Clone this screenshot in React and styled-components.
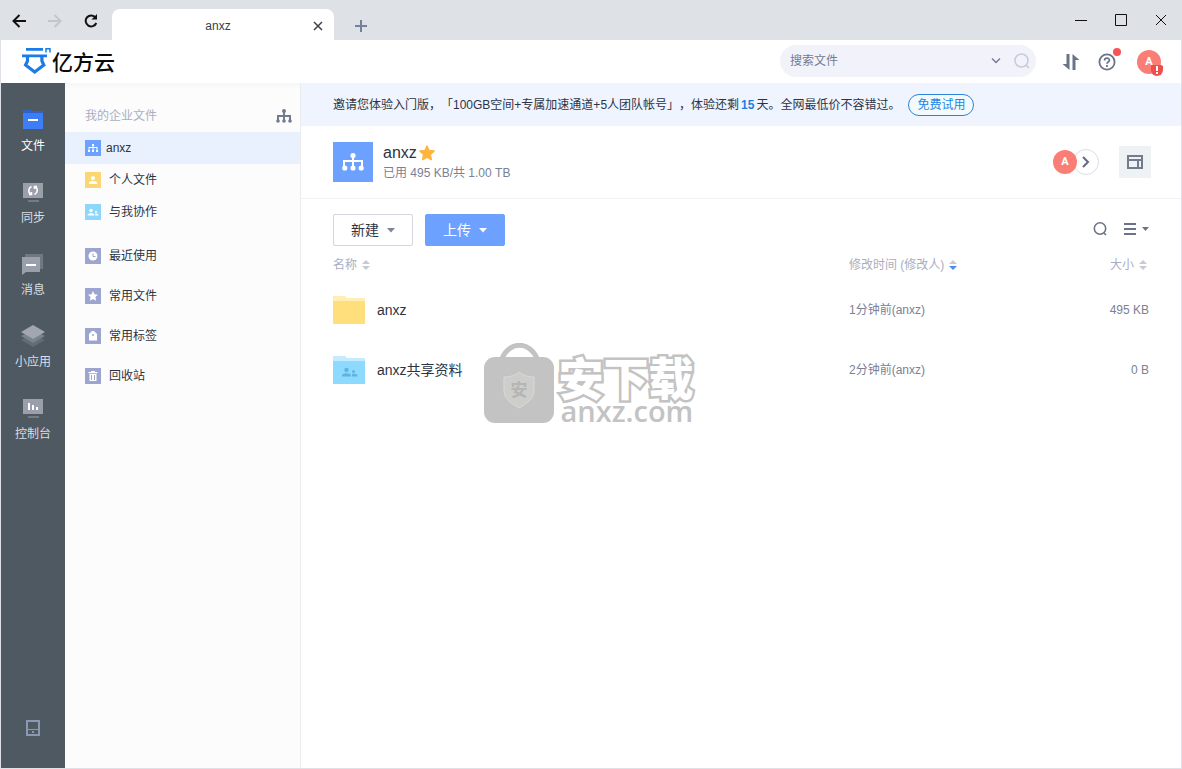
import React, { useState } from 'react';
import styled, { createGlobalStyle, css } from 'styled-components';

const GlobalStyle = createGlobalStyle`
  * {
    box-sizing: border-box;
  }

  body {
    margin: 0;
    background: #fff;
    color: #2c3444;
    font-family: 'Liberation Sans', 'Noto Sans CJK SC', sans-serif;
    font-size: 12px;
    line-height: 20px;
    text-spacing-trim: space-all;
  }

  button,
  input {
    font: inherit;
    color: inherit;
  }

  button {
    padding: 0;
    border: 0;
    background: none;
    cursor: pointer;
  }

  a {
    color: inherit;
    text-decoration: none;
  }

  h1,
  h2,
  p,
  ul {
    margin: 0;
    padding: 0;
    font-weight: 400;
    list-style: none;
  }

  svg {
    display: block;
    flex: none;
  }
`;

const StyledWindow = styled.div`
  position: relative;
  display: flex;
  flex-direction: column;
  min-height: 100vh;
  background: #dee1e6;
`;

const StyledTitleBar = styled.div`
  display: flex;
  align-items: flex-end;
  height: 40px;
  padding: 0 1px 0 2px;
`;

const StyledNavButtons = styled.div`
  display: flex;
  align-self: center;
  gap: 2px;
  width: 110px;
  padding-top: 2px;
`;

const StyledToolButton = styled.button`
  display: grid;
  place-items: center;
  width: 34px;
  height: 24px;
  color: ${({ $color }) => $color || '#111'};
`;

const StyledTab = styled.div`
  display: flex;
  align-items: center;
  width: 222px;
  height: 31px;
  padding: 2px 10px 0 12px;
  border-radius: 8px 8px 0 0;
  background: #fff;
  color: #3c4043;

  span {
    flex: 1;
    text-align: center;
  }
`;

const StyledNewTab = styled.button`
  display: grid;
  place-items: center;
  width: 24px;
  height: 28px;
  margin-left: 15px;
  color: #75819b;
`;

const StyledWindowButtons = styled.div`
  display: flex;
  align-self: center;
  margin-left: auto;

  button {
    display: grid;
    place-items: center;
    width: 40px;
    height: 40px;
    color: #111;
  }
`;

const StyledApp = styled.div`
  flex: 1;
  display: flex;
  flex-direction: column;
  margin: 0 1px 1px;
  background: #fff;
`;

const StyledHeader = styled.header`
  display: flex;
  align-items: center;
  height: 43px;
  padding: 0 20px;
`;

const StyledLogo = styled.a`
  display: flex;
  align-items: center;
  gap: 1px;
  padding-bottom: 1px;
  color: #0a0a0a;
  font-family: 'Noto Sans CJK SC', sans-serif;
  font-size: 21px;
  font-weight: 500;
`;

const StyledSearch = styled.form`
  display: flex;
  align-items: center;
  width: 256px;
  height: 32px;
  margin: 0 23px 2px auto;
  padding: 0 1px 0 10px;
  border-radius: 16px;
  background: #f2f3fa;
  color: #737a92;

  input {
    flex: 1;
    min-width: 0;
    padding: 0;
    border: 0;
    outline: 0;
    background: none;
  }

  input::placeholder {
    color: #737a92;
    opacity: 1;
  }

  button {
    display: grid;
    place-items: center;
    width: 26px;
    height: 24px;
  }
`;

const StyledHeaderActions = styled.div`
  display: flex;
  align-items: center;
  gap: 12px;
`;

const StyledHeaderButton = styled.button`
  position: relative;
  display: grid;
  place-items: center;
  width: 24px;
  height: 24px;
  color: #6b7389;
`;

const StyledAccount = styled(StyledHeaderButton)`
  margin-left: 6px;
`;

const StyledDot = styled.i`
  position: absolute;
  top: -2px;
  right: -2px;
  width: 8px;
  height: 8px;
  border-radius: 50%;
  background: #f75555;
`;

const StyledAvatar = styled.span`
  position: relative;
  display: grid;
  place-items: center;
  width: 24px;
  height: 24px;
  border-radius: 50%;
  background: #fb7e76;
  color: #fff;
  font-family: Roboto, sans-serif;
  font-size: 11px;
  font-weight: 700;
`;

const StyledAlert = styled.i`
  position: absolute;
  right: -2px;
  bottom: -2px;
`;

const StyledBody = styled.div`
  flex: 1;
  display: flex;
`;

const StyledRail = styled.nav`
  display: flex;
  flex-direction: column;
  width: 64px;
  padding: 12px 0 28px;
  background: #4e5962;
`;

const StyledRailItem = styled.a`
  display: flex;
  flex-direction: column;
  align-items: center;
  gap: 4px;
  height: 72px;
  padding-top: 13px;
  color: ${({ $active }) => ($active ? '#fff' : '#dbdee3')};
`;

const StyledDevice = styled.button`
  display: grid;
  place-items: center;
  height: 24px;
  margin-top: auto;
  color: #8c98b0;
`;

const StyledPanel = styled.aside`
  width: 236px;
  border-right: 1px solid #ebecef;
  background: linear-gradient(#f6f6f8, #fcfcfc 6px);
`;

const StyledPanelHeading = styled.div`
  display: flex;
  align-items: center;
  justify-content: space-between;
  height: 49px;
  padding: 16px 8px 0 20px;
  color: #a9aec0;

  h2 {
    font-size: 12px;
  }

  button {
    color: #737b8e;
  }
`;

const StyledPanelList = styled.ul`
  & + & {
    margin-top: 8px;
  }
`;

const StyledPanelLink = styled.a`
  display: flex;
  align-items: center;
  gap: ${({ $latin }) => ($latin ? 5 : 8)}px;
  height: ${({ $tall }) => ($tall ? 40 : 32)}px;
  padding-left: 20px;
  ${({ $active }) =>
    $active &&
    css`
      background: #e9f1ff;
    `}
`;

const StyledMain = styled.main`
  flex: 1;
  min-width: 0;
`;

const StyledBanner = styled.div`
  display: flex;
  align-items: center;
  height: 43px;
  padding: 0 32px;
  background: #f0f4ff;

  b {
    margin: 0 2px;
    color: #1f7fe0;
  }
`;

const StyledTrial = styled.a`
  margin-left: 8px;
  padding: 0 8px;
  border: 1px solid #2b84d8;
  border-radius: 11px;
  background: #f2fafe;
  color: #1c86e4;
`;

const StyledSpace = styled.section`
  display: flex;
  align-items: center;
  height: 73px;
  padding: 0 30px 0 32px;
  border-bottom: 1px solid #f1f2f5;
`;

const StyledSpaceIcon = styled.div`
  display: grid;
  place-items: center;
  width: 40px;
  height: 40px;
  margin-right: 10px;
  background: #6ca1ff;
`;

const StyledSpaceText = styled.div`
  padding-top: 2px;

  h1 {
    display: flex;
    align-items: center;
    gap: 2px;
    font-size: 16px;
    line-height: 20px;
  }

  p {
    color: #7a8196;
  }
`;

const StyledMembers = styled.div`
  display: flex;
  align-items: center;
  margin: 0 20px 0 auto;
`;

const StyledMore = styled.button`
  display: grid;
  place-items: center;
  width: 26px;
  height: 26px;
  margin-left: -4px;
  border: 1px solid #dadde3;
  border-radius: 50%;
  background: #fff;
  color: #636b80;
`;

const StyledLayoutButton = styled.button`
  display: grid;
  place-items: center;
  width: 32px;
  height: 32px;
  background: #eff2f4;
  color: #737b8e;
`;

const StyledToolbar = styled.div`
  display: flex;
  align-items: center;
  gap: 12px;
  padding: 15px 32px 4px;
`;

const StyledButton = styled.button`
  display: flex;
  align-items: center;
  justify-content: center;
  gap: 8px;
  width: 80px;
  height: 32px;
  border: 1px solid ${({ $primary }) => ($primary ? '#6ca1ff' : '#d3d6dc')};
  border-radius: 2px;
  background: ${({ $primary }) => ($primary ? '#6ca1ff' : '#fff')};
  color: ${({ $primary }) => ($primary ? '#fff' : '#2c3444')};
  font-size: 14px;

  svg {
    color: ${({ $primary }) => ($primary ? '#fff' : '#7d8494')};
  }
`;

const StyledViewTools = styled.div`
  display: flex;
  gap: 16px;
  margin-left: auto;
  padding-bottom: 2px;
  color: #6b7386;

  button {
    display: flex;
    align-items: center;
    gap: 6px;
    height: 24px;
  }
`;

const StyledTable = styled.table`
  width: calc(100% - 64px);
  margin: 0 32px;
  border-collapse: collapse;
  table-layout: fixed;

  th,
  td {
    padding: 0;
    font-weight: 400;
    text-align: left;
  }

  th {
    height: 30px;
    color: #a9aec0;
  }

  th:nth-child(2) {
    width: 200px;
  }

  th:nth-child(3) {
    width: 100px;
    padding-right: 2px;
  }

  td {
    height: 60px;
    color: #7a8196;
  }

  td:last-child {
    text-align: right;
  }
`;

const StyledSort = styled.button`
  display: flex;
  align-items: center;
  gap: 5px;
  margin-left: ${({ $end }) => ($end ? 'auto' : 0)};
`;

const StyledFile = styled.a`
  display: flex;
  align-items: center;
  gap: 12px;
  color: #2c3444;
  font-size: 14px;
`;

const StyledWatermark = styled.div`
  position: absolute;
  inset: 0;
  display: flex;
  align-items: center;
  justify-content: center;
  gap: 4px;
  padding: 0 4px 4px 0;
  color: #c3c3c3;
  pointer-events: none;

  div {
    padding-top: 20px;
  }

  strong {
    display: block;
    color: #fff;
    font-family: 'Liberation Sans', 'Noto Sans CJK SC', sans-serif;
    font-size: 45px;
    font-weight: 900;
    line-height: 36px;
    -webkit-text-stroke: 5px #c3c3c3;
    paint-order: stroke fill;
    stroke-linejoin: round;
  }

  span {
    display: block;
    padding-left: 2px;
    font-family: 'Open Sans', sans-serif;
    font-size: 29px;
    font-weight: 600;
    line-height: 24px;
  }
`;

const Caret = () => (
  <svg width="8" height="5" viewBox="0 0 8 5" fill="currentColor">
    <path d="M0 0h8L4 4.5z" />
  </svg>
);

const SortArrows = ({ desc }) => (
  <svg width="8" height="10" viewBox="0 0 8 10" fill="#c6cad5">
    <path d="M4 0l4 4H0z" />
    <path d="M4 10L0 6h8z" fill={desc ? '#4f8bf5' : '#c6cad5'} />
  </svg>
);

const OrgIcon = () => (
  <svg width="16" height="16" viewBox="0 0 16 16" fill="currentColor">
    <circle cx="8" cy="3" r="2" />
    <path d="M7 4h2v3h6v6h-2V9H9v4H7V9H3v4H1V7h6z" />
    <circle cx="2" cy="13" r="1.8" />
    <circle cx="8" cy="13" r="1.8" />
    <circle cx="14" cy="13" r="1.8" />
  </svg>
);

const SearchIcon = () => (
  <svg width="16" height="16" viewBox="0 0 16 16" fill="none" stroke="currentColor" strokeWidth="1.6">
    <circle cx="8" cy="7.5" r="5.7" />
    <path d="M11.8 11.8l2.200 2.200" />
  </svg>
);

const Logo = () => (
  <svg width="30" height="28" viewBox="0 0 30 28" fill="none" stroke="#1b7be8">
    <path d="M5 2.400h17M1 8.900h25" strokeWidth="2.600" />
    <path d="M6.500 9.500v4.500L4.600 18l9.100 7 9.100-7-1.900-4v-4.500" strokeWidth="3.200" />
    <path d="M25 5.500V1.800h4v3.700" strokeWidth="1.500" />
  </svg>
);

const railIcons = {
  files: (
    <>
      <path d="M2 2h8l2 1h10v4H2z" fill="#2f63c8" />
      <path d="M2 5h20v16H2z" fill="#3d7df5" />
      <path d="M7 11h10v2H7z" fill="#fff" />
    </>
  ),
  sync: (
    <>
      <path d="M2 3h20v15H2z" fill="#9a9fa9" />
      <path d="M7 20h11v2H7z" fill="#737b85" />
      <path
        d="M10.500 6.500C7 8 7 12.500 9.500 14M8 14.500h2.500V12M13.500 14.500C17 13 17 8.500 14.500 7M16 6.500h-2.500V9"
        fill="none"
        stroke="#fff"
        strokeWidth="1.600"
      />
    </>
  ),
  messages: (
    <>
      <path d="M4 2h18v15H4z" fill="#6f7881" />
      <path d="M1 5h18v15H5l-4 3z" fill="#9a9fa9" />
      <path d="M5 12h10v2H5z" fill="#fff" />
    </>
  ),
  apps: (
    <>
      <path d="M0 16l12-6 12 6-12 7z" fill="#626c76" />
      <path d="M0 12l12-6 12 6-12 7z" fill="#7a828c" />
      <path d="M0 8l12-7 12 7-12 7z" fill="#a1a6af" />
    </>
  ),
  console: (
    <>
      <path d="M2 3h20v15H2z" fill="#9a9fa9" />
      <path d="M7 20h11v2H7z" fill="#737b85" />
      <path d="M7 7h2v7H7zM11 9h2v5h-2zM15 11h2v3h-2z" fill="#fff" />
    </>
  ),
};

const panelIcons = {
  org: {
    color: '#6ca1ff',
    shape: (
      <path d="M7 4h2v2H7zM7.500 6h1v1h4v3h-1V8h-3v2h-1V8h-3v2h-1V7h4zM3 10h2v2H3zM7 10h2v2H7zM11 10h2v2h-2z" />
    ),
  },
  personal: {
    color: '#fcd673',
    shape: (
      <>
        <circle cx="8" cy="6" r="2" />
        <path d="M4 12V10.500C4 8.500 12 8.500 12 10.500V12z" />
      </>
    ),
  },
  shared: {
    color: '#8ed7fc',
    shape: (
      <>
        <circle cx="6" cy="6.500" r="1.700" />
        <path d="M2.500 11.500C2.500 8 9.500 8 9.500 11.500z" />
        <circle cx="11" cy="8" r="1.100" />
        <path d="M10.300 11.500c0-.700 0-1-.300-1.500 1.500-1 3.500-.300 3.500 1.500z" />
      </>
    ),
  },
  recent: {
    color: '#9ca5cf',
    shape: (
      <>
        <circle cx="8" cy="8" r="4.500" />
        <path d="M8 5.500V8.500h2.500" fill="none" stroke="#9ca5cf" />
      </>
    ),
  },
  starred: {
    color: '#9ca5cf',
    shape: <path d="M8 3l1.500 3.300 3.500.400-2.600 2.400.700 3.600L8 11l-3.100 1.700.700-3.600L3 6.700l3.500-.400z" />,
  },
  tags: {
    color: '#9ca5cf',
    shape: (
      <>
        <path d="M4 6l3-3h2l3 3v6.500H4z" />
        <circle cx="8" cy="7" r="1" fill="#9ca5cf" />
      </>
    ),
  },
  trash: {
    color: '#9ca5cf',
    shape: (
      <>
        <path d="M3.500 4H6V3h4v1h2.500v1.300h-9zM4.500 6h7v7h-7z" />
        <path d="M6.500 7v5M9.500 7v5" stroke="#9ca5cf" />
      </>
    ),
  },
};

const PanelIcon = ({ name }) => (
  <svg width="16" height="16" viewBox="0 0 16 16" fill="#fff">
    <path d="M0 0h16v16H0z" fill={panelIcons[name].color} />
    {panelIcons[name].shape}
  </svg>
);

const FolderIcon = ({ shared }) => (
  <svg width="32" height="28" viewBox="0 0 32 28">
    <path d="M0 0h12l2 2h18v5H0z" fill={shared ? '#c5ecfe' : '#ffefb5'} />
    <path d="M0 5h32v23H0z" fill={shared ? '#8edafe' : '#ffdf7b'} />
    {shared && (
      <g fill="#5db4e0">
        <circle cx="13.500" cy="14" r="2.200" />
        <path d="M9 20.500v-1c0-3 9-3 9 0v1z" />
        <circle cx="20.500" cy="15.500" r="1.500" />
        <path d="M19 20.500V18c2-.700 5.500-.300 5.500 1.500v1z" />
      </g>
    )}
  </svg>
);

const railItems = [
  { icon: 'files', label: '文件' },
  { icon: 'sync', label: '同步' },
  { icon: 'messages', label: '消息' },
  { icon: 'apps', label: '小应用' },
  { icon: 'console', label: '控制台' },
];

const spaces = [
  { icon: 'org', label: 'anxz', latin: true, active: true },
  { icon: 'personal', label: '个人文件' },
  { icon: 'shared', label: '与我协作' },
];

const shortcuts = [
  { icon: 'recent', label: '最近使用' },
  { icon: 'starred', label: '常用文件' },
  { icon: 'tags', label: '常用标签' },
  { icon: 'trash', label: '回收站' },
];

const files = [
  { name: 'anxz', modified: '1分钟前(anxz)', size: '495 KB' },
  { name: 'anxz共享资料', modified: '2分钟前(anxz)', size: '0 B', shared: true },
];

const TitleBar = () => (
  <StyledTitleBar>
    <StyledNavButtons>
      <StyledToolButton aria-label="后退">
        <svg width="14" height="14" viewBox="0 0 14 14" fill="none" stroke="currentColor" strokeWidth="2">
          <path d="M7.500 1L1.500 7l6 6M1.500 7H14" />
        </svg>
      </StyledToolButton>
      <StyledToolButton aria-label="前进" $color="#c3c6cb">
        <svg width="14" height="14" viewBox="0 0 14 14" fill="none" stroke="currentColor" strokeWidth="2">
          <path d="M6.500 1l6 6-6 6M12.500 7H0" />
        </svg>
      </StyledToolButton>
      <StyledToolButton aria-label="刷新">
        <svg width="14" height="14" viewBox="0 0 14 14" fill="none" stroke="currentColor" strokeWidth="2">
          <path d="M11.500 3.500A5.500 5.500 0 1 0 12.300 9" />
          <path d="M13 0v5.500H7.500z" fill="currentColor" stroke="none" />
        </svg>
      </StyledToolButton>
    </StyledNavButtons>
    <StyledTab>
      <span>anxz</span>
      <button aria-label="关闭标签页">
        <svg width="12" height="12" viewBox="0 0 12 12" stroke="currentColor" strokeWidth="1.500">
          <path d="M2 2l8 8M10 2l-8 8" />
        </svg>
      </button>
    </StyledTab>
    <StyledNewTab aria-label="新标签页">
      <svg width="12" height="12" viewBox="0 0 12 12" stroke="currentColor" strokeWidth="2">
        <path d="M6 0v12M0 6h12" />
      </svg>
    </StyledNewTab>
    <StyledWindowButtons>
      <button aria-label="最小化">
        <svg width="12" height="12" viewBox="0 0 12 12" stroke="currentColor">
          <path d="M0 6.500h12" />
        </svg>
      </button>
      <button aria-label="最大化">
        <svg width="12" height="12" viewBox="0 0 12 12" fill="none" stroke="currentColor">
          <path d="M.500.500h11v11H.500z" />
        </svg>
      </button>
      <button aria-label="关闭">
        <svg width="12" height="12" viewBox="0 0 12 12" stroke="currentColor">
          <path d="M1 1l10 10M11 1L1 11" />
        </svg>
      </button>
    </StyledWindowButtons>
  </StyledTitleBar>
);

const Header = () => {
  const [query, setQuery] = useState('');

  return (
    <StyledHeader>
      <StyledLogo href="#home">
        <Logo />
        亿方云
      </StyledLogo>
      <StyledSearch onSubmit={e => e.preventDefault()}>
        <input
          type="text"
          aria-label="搜索文件"
          placeholder="搜索文件"
          value={query}
          onChange={e => setQuery(e.target.value)}
        />
        <button type="button" aria-label="搜索范围">
          <svg width="10" height="6" viewBox="0 0 10 6" fill="none" stroke="currentColor" strokeWidth="1.400">
            <path d="M1 .500l4 4 4-4" />
          </svg>
        </button>
        <button type="submit" aria-label="搜索">
          <svg width="16" height="16" viewBox="0 0 16 16" fill="none" stroke="#c9ccd6" strokeWidth="1.600">
            <circle cx="7.500" cy="7.500" r="6.500" />
            <path d="M12 12l3 3" />
          </svg>
        </button>
      </StyledSearch>
      <StyledHeaderActions>
        <StyledHeaderButton aria-label="传输列表">
          <svg width="18" height="16" viewBox="0 0 18 16" fill="currentColor">
            <path d="M4.500 0h3v16L.500 10h4zM10.500 16V0l7 6h-4v10z" />
          </svg>
        </StyledHeaderButton>
        <StyledHeaderButton aria-label="帮助">
          <svg width="18" height="18" viewBox="0 0 18 18" fill="none" stroke="currentColor" strokeWidth="1.800">
            <circle cx="9" cy="9" r="7.600" />
            <path d="M6.600 7.400C6.600 4.400 11.400 4.400 11.400 7.200 11.400 9 9 8.800 9 10.800M9 12v2" />
          </svg>
          <StyledDot />
        </StyledHeaderButton>
        <StyledAccount aria-label="我的帐号">
          <StyledAvatar>
            A
            <StyledAlert>
              <svg width="12" height="12" viewBox="0 0 12 12">
                <path d="M0 1h10l2 1v4a6 6 0 0 1-12 0z" fill="#f14d4d" />
                <path d="M5 2h2v5H5zM5 8h2v2H5z" fill="#fff" />
              </svg>
            </StyledAlert>
          </StyledAvatar>
        </StyledAccount>
      </StyledHeaderActions>
    </StyledHeader>
  );
};

const Rail = () => (
  <StyledRail>
    {railItems.map(({ icon, label }, i) => (
      <StyledRailItem key={icon} href={`#${icon}`} $active={i === 0}>
        <svg width="24" height="24" viewBox="0 0 24 24">
          {railIcons[icon]}
        </svg>
        {label}
      </StyledRailItem>
    ))}
    <StyledDevice aria-label="设备">
      <svg width="14" height="16" viewBox="0 0 14 16" fill="none" stroke="currentColor" strokeWidth="2">
        <path d="M1 1h12v14H1z" />
        <path d="M1 9.500h12" strokeWidth="1" />
        <path d="M6 12h2" />
      </svg>
    </StyledDevice>
  </StyledRail>
);

const PanelItem = ({ icon, label, active, latin, tall }) => (
  <li>
    <StyledPanelLink href={`#${icon}`} $active={active} $latin={latin} $tall={tall}>
      <PanelIcon name={icon} />
      {label}
    </StyledPanelLink>
  </li>
);

const Panel = () => (
  <StyledPanel>
    <StyledPanelHeading>
      <h2>我的企业文件</h2>
      <button aria-label="组织架构">
        <OrgIcon />
      </button>
    </StyledPanelHeading>
    <StyledPanelList>
      {spaces.map(item => (
        <PanelItem key={item.icon} {...item} />
      ))}
    </StyledPanelList>
    <StyledPanelList>
      {shortcuts.map(item => (
        <PanelItem key={item.icon} {...item} tall />
      ))}
    </StyledPanelList>
  </StyledPanel>
);

const FileTable = () => (
  <StyledTable>
    <thead>
      <tr>
        <th>
          <StyledSort>
            名称 <SortArrows />
          </StyledSort>
        </th>
        <th>
          <StyledSort>
            修改时间 (修改人) <SortArrows desc />
          </StyledSort>
        </th>
        <th>
          <StyledSort $end>
            大小 <SortArrows />
          </StyledSort>
        </th>
      </tr>
    </thead>
    <tbody>
      {files.map(({ name, modified, size, shared }) => (
        <tr key={name}>
          <td>
            <StyledFile href="#folder">
              <FolderIcon shared={shared} />
              {name}
            </StyledFile>
          </td>
          <td>{modified}</td>
          <td>{size}</td>
        </tr>
      ))}
    </tbody>
  </StyledTable>
);

const Watermark = () => (
  <StyledWatermark>
    <svg width="70" height="80" viewBox="0 0 70 80" fill="none">
      <path d="M17 18C24-3 47-3 54 18" stroke="#c3c3c3" strokeWidth="5" />
      <rect y="14" width="70" height="66" rx="11" fill="#c3c3c3" />
      <path
        d="M35 29c5 4 10 5 15 5v14c0 8-8 13-15 17-7-4-15-9-15-17V34c5 0 10-1 15-5z"
        fill="#cdcdcb"
        stroke="#dadad6"
      />
      <text
        x="35"
        y="53"
        textAnchor="middle"
        fill="#b5b5b3"
        fontFamily="Noto Sans CJK SC, sans-serif"
        fontSize="17"
        fontWeight="700"
      >
        安
      </text>
    </svg>
    <div>
      <strong>安下载</strong>
      <span>anxz.com</span>
    </div>
  </StyledWatermark>
);

const App = () => (
  <>
    <GlobalStyle />
    <StyledWindow>
      <TitleBar />
      <StyledApp>
        <Header />
        <StyledBody>
          <Rail />
          <Panel />
          <StyledMain>
            <StyledBanner>
              <p>
                邀请您体验入门版，「100GB空间+专属加速通道+5人团队帐号」，体验还剩<b>15</b>
                天。全网最低价不容错过。
              </p>
              <StyledTrial href="#trial">免费试用</StyledTrial>
            </StyledBanner>
            <StyledSpace>
              <StyledSpaceIcon>
                <svg width="22" height="20" viewBox="0 0 22 20" fill="#fff">
                  <circle cx="11" cy="3.500" r="2.600" />
                  <path d="M10 5h2v3h9v7h-2v-5h-7v5h-2v-5H3v5H1V8h9z" />
                  <circle cx="2.800" cy="16" r="2.600" />
                  <circle cx="11" cy="16" r="2.600" />
                  <circle cx="19.200" cy="16" r="2.600" />
                </svg>
              </StyledSpaceIcon>
              <StyledSpaceText>
                <h1>
                  anxz
                  <svg width="16" height="16" viewBox="0 0 16 16">
                    <path
                      d="M8 1l2 4.500 5 .600-3.700 3.400 1 5L8 12l-4.300 2.500 1-5L1 6.100l5-.600z"
                      fill="#fdb53f"
                      stroke="#fdb53f"
                      strokeWidth="1.500"
                      strokeLinejoin="round"
                    />
                  </svg>
                </h1>
                <p>已用 495 KB/共 1.00 TB</p>
              </StyledSpaceText>
              <StyledMembers>
                <StyledAvatar>A</StyledAvatar>
                <StyledMore aria-label="更多成员">
                  <svg width="8" height="12" viewBox="0 0 8 12" fill="none" stroke="currentColor" strokeWidth="2">
                    <path d="M1 1l5 5-5 5" />
                  </svg>
                </StyledMore>
              </StyledMembers>
              <StyledLayoutButton aria-label="切换布局">
                <svg width="16" height="14" viewBox="0 0 16 14" fill="none" stroke="currentColor" strokeWidth="2">
                  <path d="M1 1h14v12H1zM1 5h14M11 5v8" />
                </svg>
              </StyledLayoutButton>
            </StyledSpace>
            <StyledToolbar>
              <StyledButton>
                新建 <Caret />
              </StyledButton>
              <StyledButton $primary>
                上传 <Caret />
              </StyledButton>
              <StyledViewTools>
                <button aria-label="搜索">
                  <SearchIcon />
                </button>
                <button aria-label="列表视图">
                  <svg width="12" height="12" viewBox="0 0 12 12" fill="currentColor">
                    <path d="M0 0h12v2H0zM0 5h12v2H0zM0 10h12v2H0z" />
                  </svg>
                  <svg width="7" height="4" viewBox="0 0 7 4" fill="currentColor">
                    <path d="M0 0h7L3.500 4z" />
                  </svg>
                </button>
              </StyledViewTools>
            </StyledToolbar>
            <FileTable />
          </StyledMain>
        </StyledBody>
      </StyledApp>
      <Watermark />
    </StyledWindow>
  </>
);

export default App;
